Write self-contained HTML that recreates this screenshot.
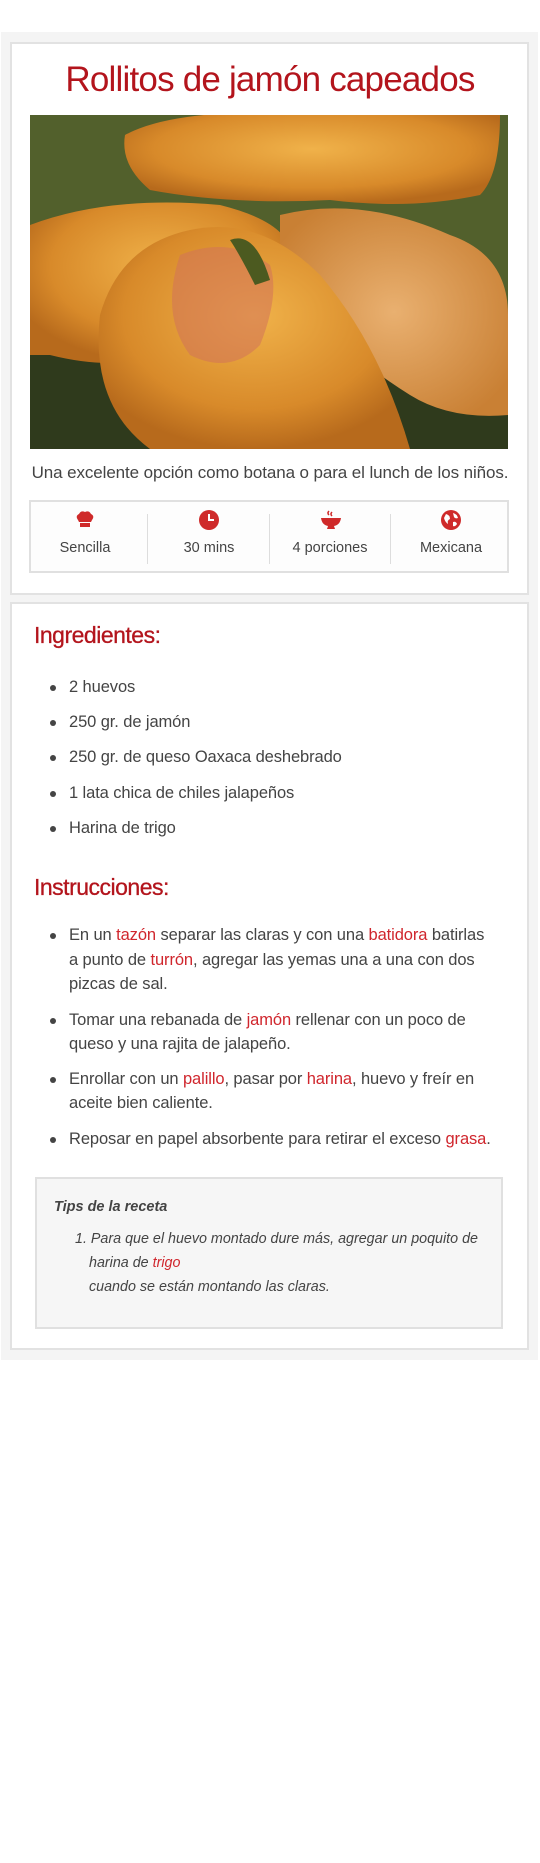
<!DOCTYPE html>
<html><head><meta charset="utf-8"><style>
*{margin:0;padding:0;box-sizing:border-box}
body{width:540px;height:1863px;background:#fff;font-family:"Liberation Sans",sans-serif;color:#444;position:relative}
.bg{position:absolute;left:1px;top:32px;width:537px;height:1328px;background:#f4f4f4}
.card{position:absolute;left:10px;width:519px;background:#fff;border:2px solid #e2e2e2}
h1{position:absolute;top:60px;left:0;width:540px;text-align:center;color:#b3141c;font-size:35px;font-weight:normal;letter-spacing:-0.8px;white-space:nowrap}
.img{position:absolute;left:30px;top:115px;width:478px;height:334px;overflow:hidden;background:#4a5a2a}
.desc{position:absolute;top:463px;left:0;width:540px;text-align:center;font-size:17px;letter-spacing:-0.1px;color:#444}
.info{position:absolute;left:29px;top:500px;width:480px;height:73px;border:2px solid #e0e0e0;background:#fdfdfd}
.cell{position:absolute;top:0;width:120px;text-align:center}
.cell svg{position:absolute;top:8px;left:50px}
.cell span{position:absolute;top:38px;left:0;width:120px;font-size:14.5px;color:#444}
.div{position:absolute;top:12px;width:1px;height:50px;background:#ddd}
h2{position:absolute;left:34px;color:#b3141c;font-size:23px;font-weight:normal;letter-spacing:-0.5px;-webkit-text-stroke:0.3px #b3141c}
.li{position:absolute;left:69px;font-size:16.5px;white-space:nowrap;letter-spacing:-0.1px}
.li.b::before{content:"";position:absolute;left:-19px;top:7px;width:6px;height:6px;border-radius:50%;background:#444}
.r{color:#d0262d}
.tips{position:absolute;left:35px;top:1177px;width:468px;height:152px;background:#f6f6f6;border:2px solid #e0e0e0}
.t{position:absolute;font-style:italic;font-size:14.3px;white-space:nowrap;color:#444}
</style></head><body>
<div class="bg"></div>
<div class="card" style="top:42px;height:553px"></div>
<div class="card" style="top:602px;height:748px"></div>
<h1>Rollitos de jamón capeados</h1>
<div class="img"><svg width="478" height="334" viewBox="0 0 478 334">
<defs>
<radialGradient id="g1" cx="50%" cy="40%" r="60%"><stop offset="0" stop-color="#f0b24a"/><stop offset=".7" stop-color="#d88a2a"/><stop offset="1" stop-color="#b76a1c"/></radialGradient>
<radialGradient id="g2" cx="50%" cy="50%" r="60%"><stop offset="0" stop-color="#e9b070"/><stop offset="1" stop-color="#c98034"/></radialGradient>
</defs>
<rect width="478" height="334" fill="#52602c"/>
<rect y="240" width="478" height="94" fill="#2f3a1c"/>
<path d="M95 20 Q150 -10 300 0 L470 0 Q470 60 450 80 Q380 95 300 85 Q200 90 120 75 Q90 50 95 20Z" fill="url(#g1)"/>
<path d="M0 110 Q80 80 190 90 Q270 110 260 150 Q200 170 150 230 Q100 260 20 240 L0 240Z" fill="url(#g1)"/>
<path d="M250 100 Q330 80 420 120 Q478 140 478 200 L478 300 Q420 305 380 280 Q300 230 250 160Z" fill="url(#g2)"/>
<path d="M70 200 Q90 130 160 115 Q230 100 290 160 Q350 230 380 334 L120 334 Q60 290 70 200Z" fill="url(#g1)"/>
<path d="M150 140 Q200 120 240 150 Q250 180 230 230 Q200 260 160 240 Q130 200 150 140Z" fill="#d2725a" opacity=".55"/>
<path d="M200 125 Q225 115 240 165 L225 170 Q210 140 200 125Z" fill="#4c5a20"/>
</svg></div>
<div class="desc">Una excelente opción como botana o para el lunch de los niños.</div>
<div class="info">
<div class="cell" style="left:-6px"><svg width="20" height="20" viewBox="0 0 20 20"><path d="M3 10 Q0 6 4 4 Q6 0 10 2 Q14 0 16 4 Q20 6 17 10 L16 12 L4 12Z" fill="#cf2a2a"/><rect x="5" y="13" width="10" height="4" fill="#cf2a2a"/></svg><span>Sencilla</span></div>
<div class="div" style="left:116px"></div>
<div class="cell" style="left:118px"><svg width="20" height="20" viewBox="0 0 20 20"><circle cx="10" cy="10" r="10" fill="#cf2a2a"/><path d="M10 4 V10 H15" stroke="#fff" stroke-width="2" fill="none"/></svg><span>30 mins</span></div>
<div class="div" style="left:238px"></div>
<div class="cell" style="left:239px"><svg width="22" height="20" viewBox="0 0 22 20"><path d="M9 1 Q7 3 9 5 M12 2 Q10 4 12 6" stroke="#cf2a2a" stroke-width="1.5" fill="none"/><path d="M1 8 H21 Q20 15 14 16 L15 19 H7 L8 16 Q2 15 1 8Z" fill="#cf2a2a"/></svg><span>4 porciones</span></div>
<div class="div" style="left:359px"></div>
<div class="cell" style="left:360px"><svg width="20" height="20" viewBox="0 0 20 20"><circle cx="10" cy="10" r="10" fill="#cf2a2a"/><path d="M5 4 Q9 5 9 9 Q6 10 7 14 Q4 12 3 8Z M12 3 Q16 4 17 8 Q14 9 13 7Z M12 12 Q15 11 16 14 Q14 17 12 16Z" fill="#fff"/></svg><span>Mexicana</span></div>
</div>
<h2 style="top:622px">Ingredientes:</h2>
<div class="li b" style="top:678px">2 huevos</div>
<div class="li b" style="top:713px">250 gr. de jamón</div>
<div class="li b" style="top:748px">250 gr. de queso Oaxaca deshebrado</div>
<div class="li b" style="top:784px">1 lata chica de chiles jalapeños</div>
<div class="li b" style="top:819px">Harina de trigo</div>
<h2 style="top:874px">Instrucciones:</h2>
<div class="li b" style="top:926px">En un <span class="r">tazón</span> separar las claras y con una <span class="r">batidora</span> batirlas</div>
<div class="li" style="top:951px">a punto de <span class="r">turrón</span>, agregar las yemas una a una con dos</div>
<div class="li" style="top:975px">pizcas de sal.</div>
<div class="li b" style="top:1011px">Tomar una rebanada de <span class="r">jamón</span> rellenar con un poco de</div>
<div class="li" style="top:1035px">queso y una rajita de jalapeño.</div>
<div class="li b" style="top:1070px">Enrollar con un <span class="r">palillo</span>, pasar por <span class="r">harina</span>, huevo y freír en</div>
<div class="li" style="top:1094px">aceite bien caliente.</div>
<div class="li b" style="top:1130px">Reposar en papel absorbente para retirar el exceso <span class="r">grasa</span>.</div>
<div class="tips"></div>
<div class="t" style="left:54px;top:1199px;font-weight:bold;font-size:14.5px">Tips de la receta</div>
<div class="t" style="left:75px;top:1231px">1. Para que el huevo montado dure más, agregar un poquito de</div>
<div class="t" style="left:89px;top:1255px">harina de <span class="r">trigo</span></div>
<div class="t" style="left:89px;top:1279px">cuando se están montando las claras.</div>
</body></html>
